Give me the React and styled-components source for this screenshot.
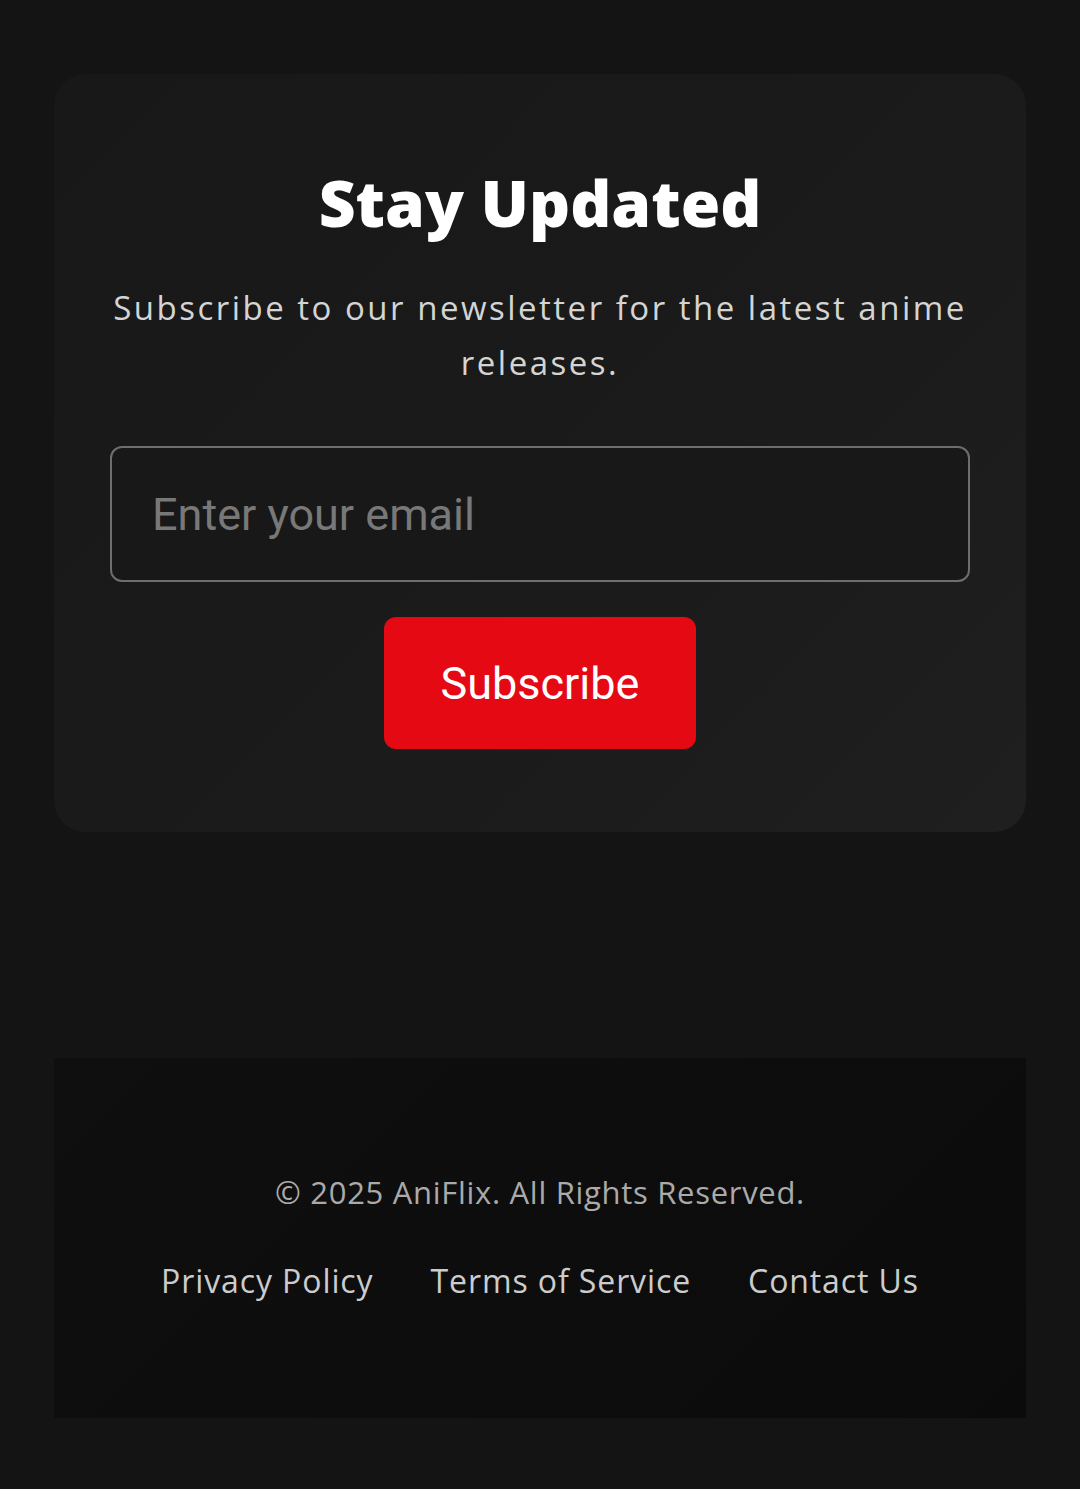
import styled, { createGlobalStyle } from "styled-components";

const GlobalStyle = createGlobalStyle`
    html, body {
        margin: 0;
        padding: 0;
        background: #141414;
    }
    body {
        font-family: "Open Sans", "Liberation Sans", sans-serif;
    }
`;

const App = () => {
    return (
        <Page>
            <GlobalStyle />
            <Newsletter>
                <Title>Stay Updated</Title>
                <Lead>Subscribe to our newsletter for the latest anime releases.</Lead>
                <Form onSubmit={(e) => e.preventDefault()}>
                    <EmailInput type="email" placeholder="Enter your email" />
                    <SubscribeButton type="submit">Subscribe</SubscribeButton>
                </Form>
            </Newsletter>
            <Footer>
                <Copy>© 2025 AniFlix. All Rights Reserved.</Copy>
                <Links>
                    <FooterLink href="#">Privacy Policy</FooterLink>
                    <FooterLink href="#">Terms of Service</FooterLink>
                    <FooterLink href="#">Contact Us</FooterLink>
                </Links>
            </Footer>
        </Page>
    );
};

const Page = styled.main`
    min-height: 1489px;
    box-sizing: border-box;
    padding: 74px 54px 71px;
    display: flex;
    flex-direction: column;
    gap: 226px;
`;

const Newsletter = styled.section`
    box-sizing: border-box;
    height: 758px;
    padding: 94px 56px 0;
    border-radius: 32px;
    background: linear-gradient(135deg, #181818 0%, #1a1a1a 50%, #1f1f1f 100%);
    display: flex;
    flex-direction: column;
    align-items: center;
    text-align: center;
`;

const Title = styled.h2`
    margin: 0;
    font-family: "Open Sans", sans-serif;
    font-weight: 800;
    font-size: 64px;
    line-height: 70px;
    color: #ffffff;
`;

const Lead = styled.p`
    margin: 42px 0 0;
    max-width: 880px;
    font-size: 33px;
    line-height: 55px;
    color: #d4d4d4;
    letter-spacing: 2.5px;
`;

const Form = styled.form`
    margin-top: 56px;
    width: 100%;
    display: flex;
    flex-direction: column;
    align-items: center;
    gap: 35px;
`;

const EmailInput = styled.input`
    box-sizing: border-box;
    width: 100%;
    height: 136px;
    padding: 0 40px;
    border: 2px solid #6e6e6e;
    border-radius: 12px;
    background: #181818;
    color: #ffffff;
    font-family: Roboto, sans-serif;
    font-size: 45px;
    outline: none;
    &::placeholder {
        color: #787878;
    }
`;

const SubscribeButton = styled.button`
    box-sizing: border-box;
    width: 312px;
    height: 132px;
    border: none;
    border-radius: 12px;
    background-color: #e50914;
    color: #ffffff;
    font-family: Roboto, sans-serif;
    font-size: 45px;
    cursor: pointer;
`;

const Footer = styled.footer`
    box-sizing: border-box;
    height: 360px;
    padding-bottom: 4px;
    background: linear-gradient(135deg, #0f0f0f 0%, #0b0b0b 100%);
    display: flex;
    flex-direction: column;
    align-items: center;
    justify-content: center;
    gap: 46px;
`;

const Copy = styled.p`
    margin: 0;
    font-size: 31px;
    color: #aaaaaa;
    letter-spacing: 0.7px;
`;

const Links = styled.nav`
    display: flex;
    gap: 57px;
`;

const FooterLink = styled.a`
    font-size: 32px;
    color: #cccccc;
    text-decoration: none;
    letter-spacing: 0.9px;
`;

export default App;
